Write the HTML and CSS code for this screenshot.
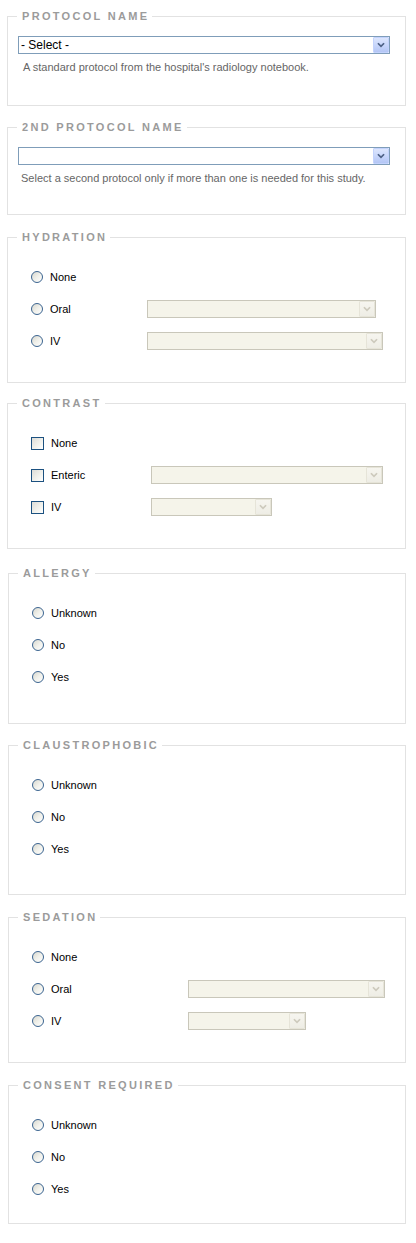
FILE: index.html
```html
<!DOCTYPE html>
<html lang="en">
<head>
<meta charset="utf-8">
<title>Protocol</title>
<link rel="stylesheet" href="styles.css">
</head>
<body>
<form class="form">

  <fieldset class="group group--protocol">
    <legend class="group-title">Protocol Name</legend>
    <div class="field">
      <div class="select select--full">
        <select class="select-input"><option>- Select -</option></select>
        <span class="select-arrow"><svg viewBox="0 0 16 16" width="16" height="16"><path d="M4.5 6 L8 9.5 L11.5 6" /></svg></span>
      </div>
      <p class="hint">A standard protocol from the hospital's radiology notebook.</p>
    </div>
  </fieldset>

  <fieldset class="group group--protocol2">
    <legend class="group-title">2nd Protocol Name</legend>
    <div class="field">
      <div class="select select--full">
        <select class="select-input"><option></option></select>
        <span class="select-arrow"><svg viewBox="0 0 16 16" width="16" height="16"><path d="M4.5 6 L8 9.5 L11.5 6" /></svg></span>
      </div>
      <p class="hint hint--tight">Select a second protocol only if more than one is needed for this study.</p>
    </div>
  </fieldset>

  <fieldset class="group group--hydration">
    <legend class="group-title">Hydration</legend>
    <div class="rows rows--hydration">
      <div class="row"><label class="choice"><input type="radio" class="radio" name="hyd"><span>None</span></label></div>
      <div class="row"><label class="choice"><input type="radio" class="radio" name="hyd"><span>Oral</span></label>
        <div class="select select--disabled sel-229"><select class="select-input" disabled><option></option></select><span class="select-arrow"><svg viewBox="0 0 16 16" width="16" height="16"><path d="M4.5 6 L8 9.5 L11.5 6" /></svg></span></div></div>
      <div class="row"><label class="choice"><input type="radio" class="radio" name="hyd"><span>IV</span></label>
        <div class="select select--disabled sel-236"><select class="select-input" disabled><option></option></select><span class="select-arrow"><svg viewBox="0 0 16 16" width="16" height="16"><path d="M4.5 6 L8 9.5 L11.5 6" /></svg></span></div></div>
    </div>
  </fieldset>

  <fieldset class="group group--contrast">
    <legend class="group-title">Contrast</legend>
    <div class="rows rows--contrast">
      <div class="row"><label class="choice"><input type="checkbox" class="check"><span>None</span></label></div>
      <div class="row"><label class="choice"><input type="checkbox" class="check"><span>Enteric</span></label>
        <div class="select select--disabled sel-232"><select class="select-input" disabled><option></option></select><span class="select-arrow"><svg viewBox="0 0 16 16" width="16" height="16"><path d="M4.5 6 L8 9.5 L11.5 6" /></svg></span></div></div>
      <div class="row"><label class="choice"><input type="checkbox" class="check"><span>IV</span></label>
        <div class="select select--disabled sel-121"><select class="select-input" disabled><option></option></select><span class="select-arrow"><svg viewBox="0 0 16 16" width="16" height="16"><path d="M4.5 6 L8 9.5 L11.5 6" /></svg></span></div></div>
    </div>
  </fieldset>

  <fieldset class="group group--allergy">
    <legend class="group-title">Allergy</legend>
    <div class="rows">
      <div class="row"><label class="choice"><input type="radio" class="radio" name="all"><span>Unknown</span></label></div>
      <div class="row"><label class="choice"><input type="radio" class="radio" name="all"><span>No</span></label></div>
      <div class="row"><label class="choice"><input type="radio" class="radio" name="all"><span>Yes</span></label></div>
    </div>
  </fieldset>

  <fieldset class="group group--claustro">
    <legend class="group-title">Claustrophobic</legend>
    <div class="rows">
      <div class="row"><label class="choice"><input type="radio" class="radio" name="cla"><span>Unknown</span></label></div>
      <div class="row"><label class="choice"><input type="radio" class="radio" name="cla"><span>No</span></label></div>
      <div class="row"><label class="choice"><input type="radio" class="radio" name="cla"><span>Yes</span></label></div>
    </div>
  </fieldset>

  <fieldset class="group group--sedation">
    <legend class="group-title">Sedation</legend>
    <div class="rows rows--sedation">
      <div class="row"><label class="choice"><input type="radio" class="radio" name="sed"><span>None</span></label></div>
      <div class="row"><label class="choice"><input type="radio" class="radio" name="sed"><span>Oral</span></label>
        <div class="select select--disabled sel-197"><select class="select-input" disabled><option></option></select><span class="select-arrow"><svg viewBox="0 0 16 16" width="16" height="16"><path d="M4.5 6 L8 9.5 L11.5 6" /></svg></span></div></div>
      <div class="row"><label class="choice"><input type="radio" class="radio" name="sed"><span>IV</span></label>
        <div class="select select--disabled sel-118"><select class="select-input" disabled><option></option></select><span class="select-arrow"><svg viewBox="0 0 16 16" width="16" height="16"><path d="M4.5 6 L8 9.5 L11.5 6" /></svg></span></div></div>
    </div>
  </fieldset>

  <fieldset class="group group--consent">
    <legend class="group-title">Consent Required</legend>
    <div class="rows">
      <div class="row"><label class="choice"><input type="radio" class="radio" name="con"><span>Unknown</span></label></div>
      <div class="row"><label class="choice"><input type="radio" class="radio" name="con"><span>No</span></label></div>
      <div class="row"><label class="choice"><input type="radio" class="radio" name="con"><span>Yes</span></label></div>
    </div>
  </fieldset>

</form>
</body>
</html>
```
FILE: styles.css
```css
html, body {
  margin: 0;
  padding: 0;
  background: #ffffff;
}

body {
  font-family: "Liberation Sans", Arial, sans-serif;
  font-size: 11px;
  color: #000;
}

.form {
  padding-top: 10px;
}

.group {
  box-sizing: border-box;
  width: 399px;
  margin: 0 0 16px 7px;
  padding: 0;
  border: 1px solid #e2e2e2;
  min-width: 0;
}

.group-title {
  margin-left: 9px;
  padding: 0 3px 0 5px;
  font-size: 11px;
  line-height: 13px;
  font-weight: bold;
  letter-spacing: 2.3px;
  text-transform: uppercase;
  color: #9b9b9b;
}

/* vertical rhythm of each group */
.group--protocol { padding: 13px 0 31px 0; margin-bottom: 15px; }
.group--protocol2 { padding: 13px 0 29px 0; margin-bottom: 16px; }
.group--hydration { padding: 17px 0 25px 0; margin-bottom: 14px; }
.group--contrast { padding: 17px 0 25px 0; margin-bottom: 18px; }
.group--allergy { padding: 17px 0 30px 0; margin-bottom: 15px; margin-left: 8px; width: 398px; }
.group--claustro { padding: 17px 0 29px 0; margin-bottom: 16px; margin-left: 8px; width: 398px; }
.group--sedation { padding: 17px 0 25px 0; margin-bottom: 16px; margin-left: 8px; width: 398px; }
.group--consent { padding: 17px 0 18px 0; margin-bottom: 0; margin-left: 8px; width: 398px; }

.field {
  padding: 0 15px 0 10px;
}

.hint {
  margin: 7px 0 0 5px;
  font-size: 11px;
  line-height: 13px;
  color: #666;
}

.hint--tight {
  margin-left: 3px;
}

/* select boxes */
.select {
  box-sizing: border-box;
  display: flex;
  align-items: stretch;
  height: 18px;
  border: 1px solid #7f9db9;
  background: #fff;
}

.select--full {
  width: 372px;
}

.select-input {
  flex: 1;
  min-width: 0;
  -webkit-appearance: none;
  appearance: none;
  border: 0;
  margin: 0;
  padding: 0 0 0 2px;
  background: transparent;
  font-family: "Liberation Sans", Arial, sans-serif;
  font-size: 12px;
  line-height: 16px;
  height: 16px;
  color: #000;
  outline: none;
}

.select-arrow {
  box-sizing: border-box;
  flex: 0 0 16px;
  width: 16px;
  height: 16px;
  border: 1px solid #c3d3fd;
  border-radius: 1px;
  background: linear-gradient(180deg, #dde6fd 0%, #c6d5fb 55%, #b4c6f5 100%);
  display: flex;
  align-items: center;
  justify-content: center;
}

.select-arrow svg {
  width: 14px;
  height: 14px;
  fill: none;
  stroke: #4d6185;
  stroke-width: 2;
}

.select--disabled {
  border-color: #c9c7ba;
  background: #f5f4ea;
}

.select--disabled .select-input {
  color: #aca899;
}

.select--disabled .select-arrow {
  border-color: #e6e4d8;
  background: linear-gradient(180deg, #f6f5ef 0%, #eeede5 100%);
}

.select--disabled .select-arrow svg {
  stroke: #cdcabd;
}

.sel-229 { width: 229px; }
.sel-236 { width: 236px; }
.sel-232 { width: 232px; }
.sel-121 { width: 121px; }
.sel-197 { width: 197px; }
.sel-118 { width: 118px; }

/* option rows */
.rows {
  display: flex;
  flex-direction: column;
  padding-left: 23px;
}

.row {
  display: flex;
  align-items: center;
  height: 32px;
}

.choice {
  display: flex;
  align-items: center;
  gap: 7px;
  font-size: 11px;
  line-height: 13px;
}

.rows--hydration .choice { width: 116px; }
.rows--contrast .choice { width: 120px; }
.rows--sedation .choice { width: 156px; }

.radio {
  -webkit-appearance: none;
  appearance: none;
  box-sizing: border-box;
  width: 12px;
  height: 12px;
  margin: 0;
  border: 1px solid #3b6490;
  border-radius: 50%;
  background: linear-gradient(135deg, #d7d7cf 0%, #f0f0ea 50%, #ffffff 100%);
}

.check {
  -webkit-appearance: none;
  appearance: none;
  box-sizing: border-box;
  width: 13px;
  height: 13px;
  margin: 0;
  border: 1px solid #1c5180;
  background: linear-gradient(135deg, #dcdcd7 0%, #f1f1ec 55%, #ffffff 100%);
}
```
